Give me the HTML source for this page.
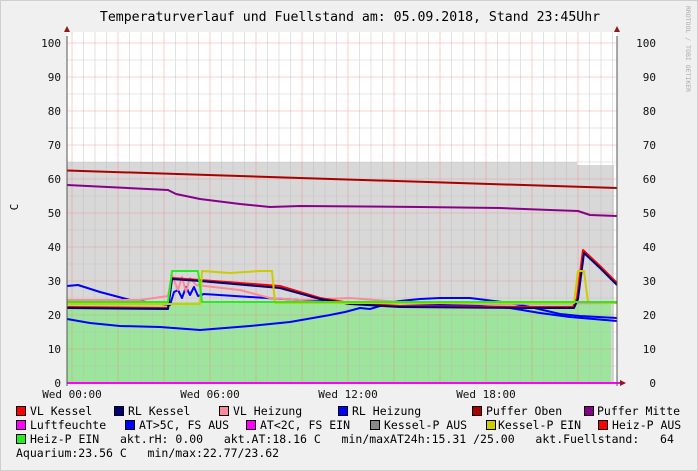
<!DOCTYPE html>
<html><head><meta charset="utf-8"><style>
body{margin:0;width:698px;height:471px;overflow:hidden;background:#f0f0f0;font-family:"DejaVu Sans Mono","Liberation Mono",monospace;}
.f{position:absolute;left:0;top:0;width:696px;height:469px;border:1px solid #cfcfcf;}
.t{position:absolute;font-size:11.5px;color:#000;white-space:pre;line-height:13px}
.s{position:absolute;width:8px;height:8px;border:1px solid #000}
</style></head><body><div class="f"></div>
<svg width="698" height="471" style="position:absolute;left:0;top:0" font-family="DejaVu Sans Mono, Liberation Mono, monospace">
<rect x="67" y="32" width="550" height="351" fill="#fff"/>
<path d="M67,162 L577,162 L577,165 L614,165 L614,383 L67,383Z" fill="#d8d8d8"/>
<path d="M67,302 L611,302 L611,383 L67,383Z" fill="#9de59d"/>
<g stroke="#bbb" stroke-width="0.6" opacity="0.7">
<path d="M67,366H617M67,332H617M67,298H617M67,264H617M67,230H617M67,196H617M67,162H617M67,128H617M67,94H617M67,60H617"/>
<path d="M83.5,32V383M95,32V383M106.5,32V383M129.5,32V383M141,32V383M152.5,32V383M175.5,32V383M187,32V383M198.5,32V383M221.5,32V383M233,32V383M244.5,32V383M267.5,32V383M279,32V383M290.5,32V383M313.5,32V383M325,32V383M336.5,32V383M359.5,32V383M371,32V383M382.5,32V383M405.5,32V383M417,32V383M428.5,32V383M451.5,32V383M463,32V383M474.5,32V383M497.5,32V383M509,32V383M520.5,32V383M543.5,32V383M555,32V383M566.5,32V383M589.5,32V383M601,32V383M612.5,32V383"/>
</g>
<g stroke="#f08080" stroke-width="0.6" opacity="0.65">
<path d="M67,349H617M67,315H617M67,281H617M67,247H617M67,213H617M67,179H617M67,145H617M67,111H617M67,77H617M67,43H617"/>
<path d="M72,32V383M118,32V383M164,32V383M210,32V383M256,32V383M302,32V383M348,32V383M394,32V383M440,32V383M486,32V383M532,32V383M578,32V383"/>
</g>
<g fill="none" stroke-width="2" stroke-linejoin="round">
<path d="M67,170.5 L300,178 L617,188" stroke="#aa0000"/>
<path d="M67,185 L168,190 L176,194 L200,199 L240,204 L270,207 L300,206 L420,207 L500,208 L550,210 L578,211 L590,215 L617,216" stroke="#880088"/>
<path d="M67,319 L90,323 L120,326 L160,327 L200,330 L250,326 L290,322 L330,315 L345,312 L360,308 L370,309 L380,306 L400,306 L440,305 L480,306 L510,308 L540,313 L570,317 L617,321" stroke="#0000ff"/>
<path d="M67,286 L78,285 L100,292 L130,300 L170,305 L174,292 L178,290 L182,298 L186,287 L190,295 L194,287 L198,296 L204,294 L250,297 L300,300 L340,302 L380,303 L400,301 L420,299 L440,298 L470,298 L510,303 L530,307 L560,314 L580,316 L617,318" stroke="#0000ff"/>
<path d="M67,300 L140,300 L168,296 L172,275 L178,290 L182,277 L186,292 L190,278 L196,285 L240,290 L270,298 L300,300 L350,298 L400,302 L500,304 L617,303" stroke="#ff8899"/>
<path d="M67,307 L168,308 L172,278 L200,280 L280,286 L320,298 L350,303 L400,306 L520,307 L573,307 L577,298 L583,250 L600,266 L617,283" stroke="#ff0000"/>
<path d="M67,308 L168,309 L172,279 L200,281 L280,288 L320,299 L350,304 L400,307 L520,308 L574,308 L578,299 L584,253 L600,268 L617,285" stroke="#000077"/>
<path d="M67,304 L200,304 L202,271 L230,273 L260,271 L272,271 L275,303 L574,303 L578,271 L584,271 L588,302 L617,303" stroke="#cccc00"/>
<path d="M67,302 L168,302 L172,271 L198,271 L202,302 L617,302" stroke="#22ee22"/>
</g>
<path d="M67,383H620" stroke="#ff00ff" stroke-width="2"/>
<path d="M67,36V386M617,36V386" stroke="#555" stroke-width="1"/>
<path d="M64,32L67,26L70,32ZM614,32L617,26L620,32ZM620,380L626,383L620,386Z" fill="#8b1a1a"/>
<g font-size="11" text-anchor="end" fill="#111">
<text x="61" y="47">100</text><text x="61" y="81">90</text><text x="61" y="115">80</text><text x="61" y="149">70</text><text x="61" y="183">60</text><text x="61" y="217">50</text><text x="61" y="251">40</text><text x="61" y="285">30</text><text x="61" y="319">20</text><text x="61" y="353">10</text><text x="61" y="387">0</text>
</g>
<g font-size="11" text-anchor="end" fill="#111">
<text x="656" y="47">100</text><text x="656" y="81">90</text><text x="656" y="115">80</text><text x="656" y="149">70</text><text x="656" y="183">60</text><text x="656" y="217">50</text><text x="656" y="251">40</text><text x="656" y="285">30</text><text x="656" y="319">20</text><text x="656" y="353">10</text><text x="656" y="387">0</text>
</g>
<g font-size="11" text-anchor="middle" fill="#111">
<text x="72" y="398">Wed 00:00</text><text x="210" y="398">Wed 06:00</text><text x="348" y="398">Wed 12:00</text><text x="486" y="398">Wed 18:00</text>
</g>
<text x="350" y="21" font-size="13.2" text-anchor="middle" fill="#000">Temperaturverlauf und Fuellstand am: 05.09.2018, Stand 23:45Uhr</text>
<text x="0" y="0" font-size="11" transform="translate(18,207) rotate(-90)" text-anchor="middle">C</text>
<text x="0" y="0" font-size="6.5" fill="#aaa" transform="translate(686,6) rotate(90)">RRDTOOL / TOBI OETIKER</text>
</svg>
<div class="s" style="left:16px;top:406px;background:#ff0000"></div><div class="t" style="left:30px;top:405px">VL Kessel</div>
<div class="s" style="left:114px;top:406px;background:#000077"></div><div class="t" style="left:128px;top:405px">RL Kessel</div>
<div class="s" style="left:219px;top:406px;background:#ff8899"></div><div class="t" style="left:233px;top:405px">VL Heizung</div>
<div class="s" style="left:338px;top:406px;background:#0000ff"></div><div class="t" style="left:352px;top:405px">RL Heizung</div>
<div class="s" style="left:472px;top:406px;background:#aa0000"></div><div class="t" style="left:486px;top:405px">Puffer Oben</div>
<div class="s" style="left:584px;top:406px;background:#880088"></div><div class="t" style="left:597px;top:405px">Puffer Mitte</div>
<div class="s" style="left:16px;top:420px;background:#ff00ff"></div><div class="t" style="left:30px;top:419px">Luftfeuchte</div>
<div class="s" style="left:125px;top:420px;background:#0000ff"></div><div class="t" style="left:139px;top:419px">AT&gt;5C, FS AUS</div>
<div class="s" style="left:246px;top:420px;background:#ff00ff"></div><div class="t" style="left:260px;top:419px">AT&lt;2C, FS EIN</div>
<div class="s" style="left:370px;top:420px;background:#888"></div><div class="t" style="left:384px;top:419px">Kessel-P AUS</div>
<div class="s" style="left:486px;top:420px;background:#cccc00"></div><div class="t" style="left:498px;top:419px">Kessel-P EIN</div>
<div class="s" style="left:598px;top:420px;background:#ff0000"></div><div class="t" style="left:612px;top:419px">Heiz-P AUS</div>
<div class="s" style="left:16px;top:434px;background:#22ee22"></div><div class="t" style="left:30px;top:433px">Heiz-P EIN   akt.rH: 0.00   akt.AT:18.16 C   min/maxAT24h:15.31 /25.00   akt.Fuellstand:   64</div>
<div class="t" style="left:16px;top:447px">Aquarium:23.56 C   min/max:22.77/23.62</div>
</body></html>
